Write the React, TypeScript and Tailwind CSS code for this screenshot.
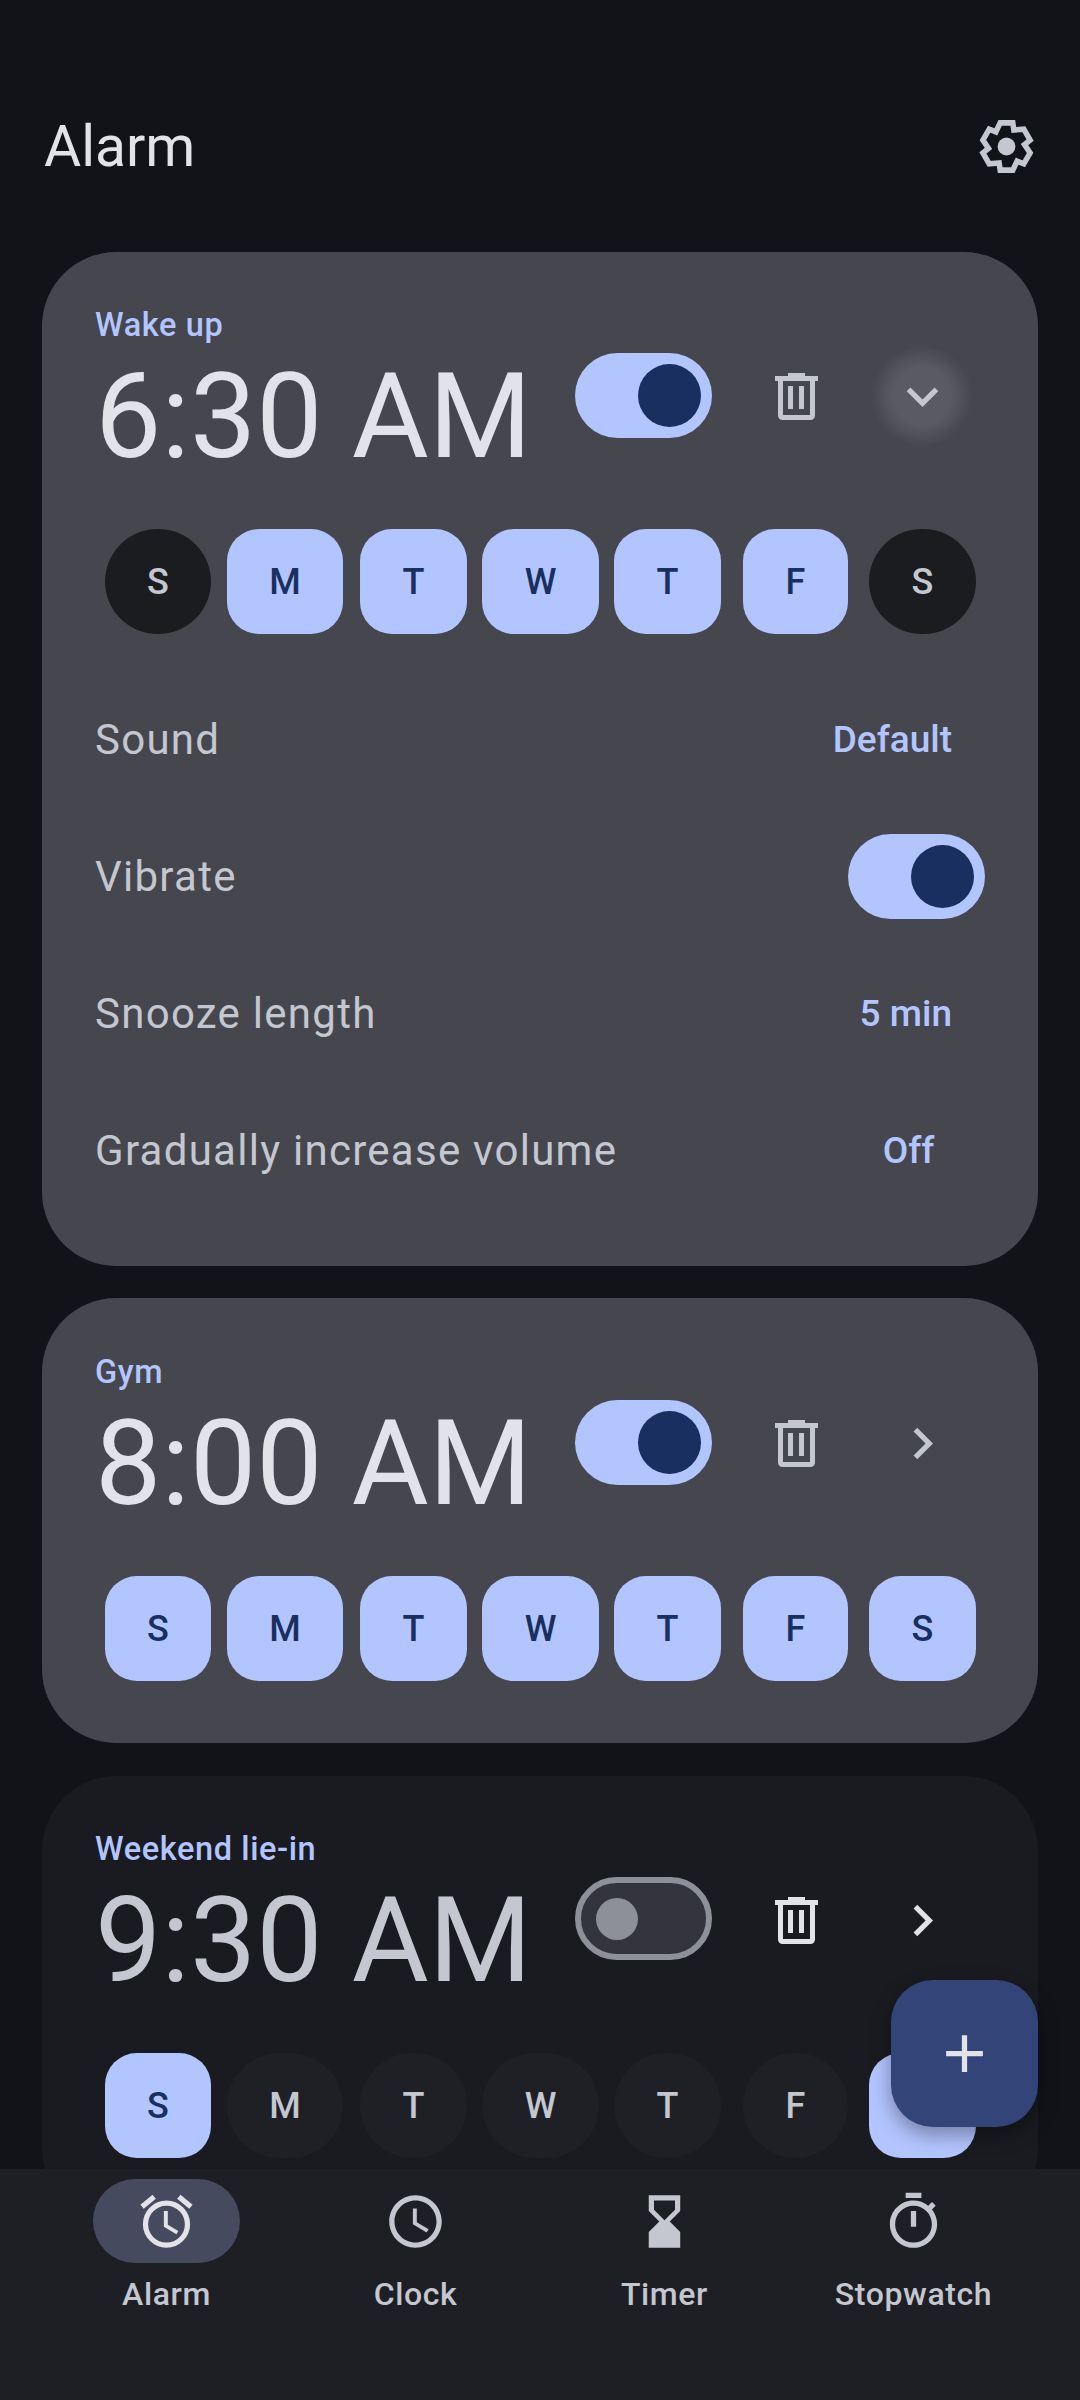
import { MdAdd, MdChevronRight, MdExpandMore, MdHourglassBottom, MdOutlineAlarm, MdOutlineSchedule, MdOutlineTimer } from 'react-icons/md';

const DAY_SLOTS = [
  { label: 'S', cls: 'w-[106px]' },
  { label: 'M', cls: 'w-[116px] ml-[16px]' },
  { label: 'T', cls: 'w-[107px] ml-[17px]' },
  { label: 'W', cls: 'w-[117px] ml-[15px]' },
  { label: 'T', cls: 'w-[107px] ml-[15px]' },
  { label: 'F', cls: 'w-[105px] ml-[22px]' },
  { label: 'S', cls: 'w-[107px] ml-[21px]' },
];

// Gear outline, built from six rotated teeth (24 unit box)
function gearPath() {
  const tooth = [[-2.4, -9], [2.4, -9], [2.8, -6.3]];
  const pts: string[] = [];
  for (let k = 0; k < 6; k++) {
    const a = (k * Math.PI) / 3;
    for (const [x, y] of tooth) {
      pts.push(`${(12 + x * Math.cos(a) - y * Math.sin(a)).toFixed(2)} ${(12 + x * Math.sin(a) + y * Math.cos(a)).toFixed(2)}`);
    }
  }
  return `M${pts.join('L')}Z`;
}

function GearIcon() {
  return (
    <svg viewBox="0 0 24 24" className="w-[63px] h-[63px] text-[#c4c6d0]" fill="none">
      <path d={gearPath()} stroke="currentColor" strokeWidth="2.1" />
      <circle cx="12" cy="12" r="3.4" fill="currentColor" />
    </svg>
  );
}

function TrashIcon() {
  return (
    <svg viewBox="0 0 63 63" className="w-[63px] h-[63px]" fill="currentColor">
      <rect x="23" y="8" width="17" height="4" />
      <rect x="10" y="11" width="43" height="5" />
      <path d="M15.5 15v35.5a2 2 0 0 0 2 2h28a2 2 0 0 0 2-2V15" fill="none" stroke="currentColor" strokeWidth="5" />
      <rect x="23" y="21" width="5" height="23" />
      <rect x="34" y="21" width="5" height="23" />
    </svg>
  );
}

function Toggle({ on }: { on: boolean }) {
  if (on) {
    return (
      <div className="w-[137px] h-[85px] rounded-full bg-[#b3c5ff] flex items-center justify-end pr-[11px] shrink-0">
        <div className="w-[63px] h-[63px] rounded-full bg-[#182f60]" />
      </div>
    );
  }
  return (
    <div className="w-[137px] h-[83px] rounded-full bg-[#33343c] border-[6px] border-[#8e9099] flex items-center pl-[15px] shrink-0">
      <div className="w-[42px] h-[42px] rounded-full bg-[#8e9099]" />
    </div>
  );
}

function DayChips({ selected, off }: { selected: number[]; off: string }) {
  return (
    <div className="flex ml-[10px] mt-[46px]">
      {DAY_SLOTS.map((d, i) => (
        <div
          key={i}
          className={
            selected.includes(i)
              ? `${d.cls} h-[105px] rounded-[32px] bg-[#b3c5ff] text-[#182f60] flex items-center justify-center text-[36px] font-medium`
              : `${d.cls} h-[105px] rounded-full ${off} text-[#c4c6d0] flex items-center justify-center text-[36px] font-medium`
          }
        >
          {d.label}
        </div>
      ))}
    </div>
  );
}

function AlarmHead({ label, time, on, expanded, dim }: { label: string; time: string; on: boolean; expanded?: boolean; dim?: boolean }) {
  return (
    <>
      <div className="h-[45px] leading-[47px] text-[32.5px] font-medium tracking-[0.6px] text-[#b3c5ff]">{label}</div>
      <div className="flex items-start">
        <div className={dim ? 'w-[480px] h-[136px] leading-[140px] text-[118px] text-[#c4c6d0] whitespace-nowrap' : 'w-[480px] h-[136px] leading-[140px] text-[118px] text-[#e2e2e9] whitespace-nowrap'}>
          {time}
        </div>
        <div className="mt-[6px]">
          <Toggle on={on} />
        </div>
        <div className={dim ? 'ml-[35px] w-[98px] h-[98px] flex items-center justify-center text-[#e2e2e9]' : 'ml-[35px] w-[98px] h-[98px] flex items-center justify-center text-[#c4c6d0]'}>
          <TrashIcon />
        </div>
        {expanded ? (
          <div className="ml-[26px] w-[102px] h-[102px] -mt-[2px] rounded-full flex items-center justify-center text-[#c4c6d0] bg-[radial-gradient(circle,#5a5b62_0%,#5a5b62_40%,#46464f_70%)]">
            <MdExpandMore size={63} />
          </div>
        ) : (
          <div className={dim ? 'ml-[28px] w-[98px] h-[98px] flex items-center justify-center text-[#e2e2e9]' : 'ml-[28px] w-[98px] h-[98px] flex items-center justify-center text-[#c4c6d0]'}>
            <MdChevronRight size={63} />
          </div>
        )}
      </div>
    </>
  );
}

function SettingRow({ label, value, toggle }: { label: string; value?: string; toggle?: boolean }) {
  return (
    <div className="h-[137px] flex items-center justify-between">
      <span className="text-[42px] tracking-[1.27px] text-[#c4c6d0]">{label}</span>
      {toggle ? (
        <Toggle on />
      ) : (
        <span className="min-w-[153px] px-[33px] text-center text-[37px] font-medium text-[#b3c5ff]">{value}</span>
      )}
    </div>
  );
}

const NAV = [
  { label: 'Alarm', icon: <MdOutlineAlarm size={63} />, active: true },
  { label: 'Clock', icon: <MdOutlineSchedule size={63} /> },
  { label: 'Timer', icon: <MdHourglassBottom size={63} /> },
  { label: 'Stopwatch', icon: <MdOutlineTimer size={63} /> },
];

export default function App() {
  return (
    <div className="relative w-[1080px] h-[2400px] overflow-hidden bg-[#111318] flex flex-col font-['Roboto',sans-serif]">
      <div className="flex-1 min-h-0 overflow-hidden px-[42px]">
        {/* Header */}
        <div className="h-[252px] pt-[115px] flex items-start justify-between">
          <h1 className="ml-[2px] h-[64px] leading-[64px] text-[57px] text-[#e2e2e9]">Alarm</h1>
          <GearIcon />
        </div>

        {/* Wake up, expanded */}
        <div className="rounded-[74px] bg-[#46464f] pt-[50px] px-[53px] pb-[47px]">
          <AlarmHead label="Wake up" time="6:30 AM" on expanded />
          <DayChips selected={[1, 2, 3, 4, 5]} off="bg-[#1b1c20]" />
          <div className="mt-[37px]">
            <SettingRow label="Sound" value="Default" />
            <SettingRow label="Vibrate" toggle />
            <SettingRow label="Snooze length" value="5 min" />
            <SettingRow label="Gradually increase volume" value="Off" />
          </div>
        </div>

        {/* Gym */}
        <div className="mt-[32px] rounded-[74px] bg-[#46464f] pt-[51px] px-[53px] pb-[62px]">
          <AlarmHead label="Gym" time="8:00 AM" on />
          <DayChips selected={[0, 1, 2, 3, 4, 5, 6]} off="bg-[#1b1c20]" />
        </div>

        {/* Weekend lie-in, disabled */}
        <div className="mt-[33px] rounded-[74px] bg-[#1a1b20] pt-[50px] px-[53px] pb-[63px]">
          <AlarmHead label="Weekend lie-in" time="9:30 AM" on={false} dim />
          <DayChips selected={[0, 6]} off="bg-[#1e2025]" />
        </div>
      </div>

      {/* Add button */}
      <div className="absolute left-[891px] top-[1980px] w-[147px] h-[147px] rounded-[42px] bg-[#324478] text-[#e2e2e9] flex items-center justify-center shadow-[0_8px_20px_rgba(0,0,0,0.35)]">
        <MdAdd size={63} />
      </div>

      {/* Bottom navigation */}
      <div className="h-[231px] shrink-0 bg-[#1e1f25] px-[42px] pt-[10px] flex items-start">
        {NAV.map((n) => (
          <div key={n.label} className="w-[249px] flex flex-col items-center">
            <div className={n.active ? 'w-[147px] h-[84px] rounded-full bg-[#454a5e] text-[#e2e2e9] flex items-center justify-center' : 'w-[147px] h-[84px] rounded-full text-[#c4c6d0] flex items-center justify-center'}>
              {n.icon}
            </div>
            <div className="mt-[10px] leading-[42px] text-[32px] font-medium tracking-[0.6px] text-[#c4c6d0]">{n.label}</div>
          </div>
        ))}
      </div>
    </div>
  );
}
